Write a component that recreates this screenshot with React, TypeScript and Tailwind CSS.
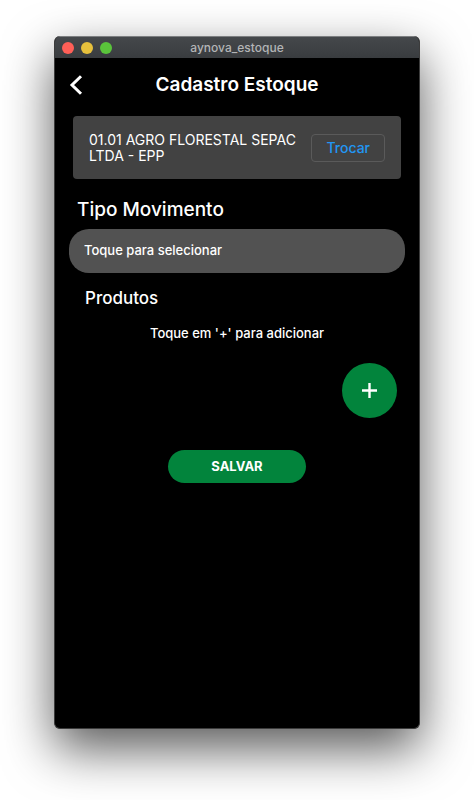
import { useState } from 'react';

const TRAFFIC_LIGHTS = [
  { label: 'Fechar', color: 'bg-[#ff5f57]' },
  { label: 'Minimizar', color: 'bg-[#e6c03c]' },
  { label: 'Ampliar', color: 'bg-[#5ac43b]' },
];

const TIPOS = ['Entrada', 'Saída', 'Transferência'];

function TitleBar() {
  return (
    <div className="grid grid-cols-[1fr_auto_1fr] items-center h-[22px] px-[7px] bg-linear-to-b from-[#45484b] to-[#393c3f] border-t border-[#7d7f81]">
      <div className="flex gap-[7px]">
        {TRAFFIC_LIGHTS.map(t => (
          <button key={t.label} aria-label={t.label} className={`w-3 h-3 rounded-full ${t.color}`} />
        ))}
      </div>
      <span className="text-xs font-medium text-[#b3b5b6]">aynova_estoque</span>
    </div>
  );
}

export default function App() {
  const [tipo, setTipo] = useState('');

  return (
    <div className="min-h-screen flex flex-col bg-white px-[54px] pt-9 pb-[71px] font-['Inter',sans-serif]">
      <div className="flex-1 flex flex-col bg-black text-white rounded-md overflow-hidden border border-t-0 border-[#3c3c3c] shadow-[0_20px_50px_rgba(0,0,0,0.65)]">
        <TitleBar />

        <header className="grid grid-cols-[48px_1fr_48px] items-center h-[54px]">
          <button aria-label="Voltar" className="flex justify-center pr-[6px]">
            <svg viewBox="0 0 14 20" className="w-3.5 h-5" fill="none" stroke="currentColor" strokeWidth="3">
              <path d="M12 1.2 3 10l9 8.8" />
            </svg>
          </button>
          <h1 className="text-[19px] font-semibold text-center">Cadastro Estoque</h1>
        </header>

        <main className="px-[14px] pt-1">
          {/* Empresa */}
          <section className="mx-1 h-[63px] px-4 flex items-center justify-between gap-3 bg-[#424242] rounded">
            <p className="text-sm leading-4">01.01 AGRO FLORESTAL SEPAC LTDA - EPP</p>
            <button className="shrink-0 h-7 px-[14px] text-sm font-medium text-[#2196f3] border border-[#5a5a5a] rounded">Trocar</button>
          </section>

          <label htmlFor="tipo" className="block mt-[17px] px-2 text-[19px] font-medium leading-7">Tipo Movimento</label>
          <select
            id="tipo"
            value={tipo}
            onChange={e => setTipo(e.target.value)}
            className="block w-full h-11 mt-[5px] px-[15px] text-[13px] font-medium bg-[#525252] rounded-[20px] appearance-none focus:outline-none"
          >
            <option value="">Toque para selecionar</option>
            {TIPOS.map(t => (
              <option key={t} value={t}>{t}</option>
            ))}
          </select>

          {/* Produtos */}
          <h2 className="mt-[13px] px-4 text-[17px] font-medium leading-6">Produtos</h2>
          <p className="mt-[13px] text-[13px] font-medium leading-5 text-center">Toque em '+' para adicionar</p>
          <div className="flex justify-end mt-5 pr-2">
            <button aria-label="Adicionar produto" className="w-[55px] h-[55px] flex items-center justify-center bg-[#02843c] rounded-full">
              <svg viewBox="0 0 15 15" className="w-[15px] h-[15px]" stroke="currentColor" strokeWidth="2.4">
                <path d="M7.5 0v15M0 7.5h15" />
              </svg>
            </button>
          </div>

          <button className="block mx-auto mt-8 w-[138px] h-[33px] text-[13px] font-bold bg-[#02843c] rounded-full">SALVAR</button>
        </main>
      </div>
    </div>
  );
}
